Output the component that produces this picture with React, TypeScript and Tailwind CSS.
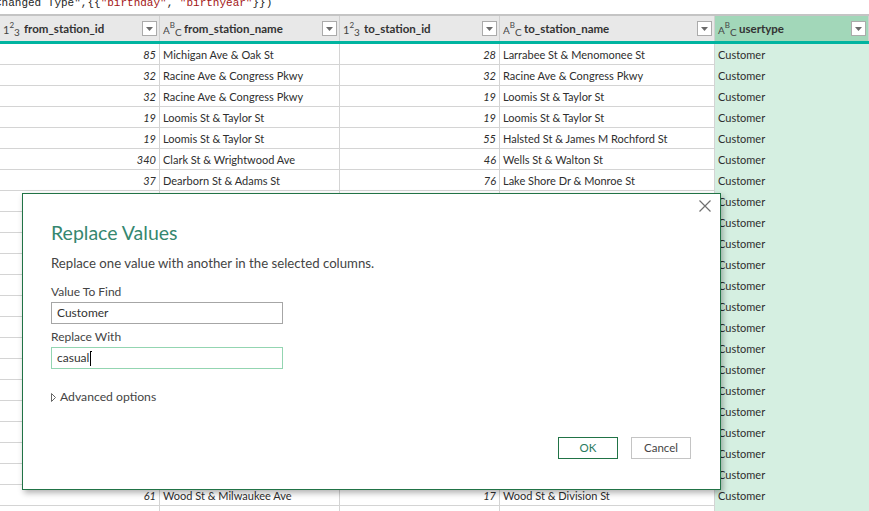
import React from "react";

type Row = { fid: string; fname: string; tid: string; tname: string };

const rows: Row[] = [
  { fid: "85", fname: "Michigan Ave & Oak St", tid: "28", tname: "Larrabee St & Menomonee St" },
  { fid: "32", fname: "Racine Ave & Congress Pkwy", tid: "32", tname: "Racine Ave & Congress Pkwy" },
  { fid: "32", fname: "Racine Ave & Congress Pkwy", tid: "19", tname: "Loomis St & Taylor St" },
  { fid: "19", fname: "Loomis St & Taylor St", tid: "19", tname: "Loomis St & Taylor St" },
  { fid: "19", fname: "Loomis St & Taylor St", tid: "55", tname: "Halsted St & James M Rochford St" },
  { fid: "340", fname: "Clark St & Wrightwood Ave", tid: "46", tname: "Wells St & Walton St" },
  { fid: "37", fname: "Dearborn St & Adams St", tid: "76", tname: "Lake Shore Dr & Monroe St" },
  { fid: "76", fname: "Lake Shore Dr & Monroe St", tid: "35", tname: "Streeter Dr & Grand Ave" },
  { fid: "35", fname: "Streeter Dr & Grand Ave", tid: "35", tname: "Streeter Dr & Grand Ave" },
  { fid: "268", fname: "Lake Shore Dr & North Blvd", tid: "90", tname: "Millennium Park" },
  { fid: "90", fname: "Millennium Park", tid: "3", tname: "Shedd Aquarium" },
  { fid: "3", fname: "Shedd Aquarium", tid: "97", tname: "Field Museum" },
  { fid: "97", fname: "Field Museum", tid: "3", tname: "Shedd Aquarium" },
  { fid: "177", fname: "Theater on the Lake", tid: "177", tname: "Theater on the Lake" },
  { fid: "85", fname: "Michigan Ave & Oak St", tid: "85", tname: "Michigan Ave & Oak St" },
  { fid: "2", fname: "Buckingham Fountain", tid: "2", tname: "Buckingham Fountain" },
  { fid: "43", fname: "Michigan Ave & Washington St", tid: "52", tname: "Michigan Ave & Lake St" },
  { fid: "52", fname: "Michigan Ave & Lake St", tid: "43", tname: "Michigan Ave & Washington St" },
  { fid: "300", fname: "Broadway & Barry Ave", tid: "117", tname: "Wilton Ave & Belmont Ave" },
  { fid: "117", fname: "Wilton Ave & Belmont Ave", tid: "300", tname: "Broadway & Barry Ave" },
  { fid: "17", fname: "Wood St & Division St", tid: "61", tname: "Wood St & Milwaukee Ave" },
  { fid: "61", fname: "Wood St & Milwaukee Ave", tid: "17", tname: "Wood St & Division St" },
  { fid: "17", fname: "Wood St & Division St", tid: "17", tname: "Wood St & Division St" },
];

const NumIcon = () => (
  <span className="inline-flex items-start text-[11px] leading-none text-[#444] w-[17px] shrink-0">
    <span className="mt-[4px]">1</span>
    <span className="text-[8px] mt-[1px]">2</span>
    <span className="mt-[7px] text-[10px]">3</span>
  </span>
);

const TextIcon = () => (
  <span className="inline-flex items-start text-[10px] leading-none text-[#444] w-[17px] shrink-0">
    <span className="mt-[5px]">A</span>
    <span className="text-[8px] mt-[1px]">B</span>
    <span className="mt-[7px]">C</span>
  </span>
);

const Dropdown = () => (
  <span className="w-[15px] h-[15px] bg-white border border-[#ababab] flex items-center justify-center shrink-0">
    <svg width="7" height="4" viewBox="0 0 7 4">
      <path d="M0 0 L7 0 L3.5 4 Z" fill="#6b6b6b" />
    </svg>
  </span>
);

const HeaderCell = ({ icon, label, green }: { icon: "num" | "text"; label: string; green?: boolean }) => (
  <div className={`h-full flex items-center pl-[3px] pr-[2px] border-r border-[#d0d0d0] ${green ? "bg-[#a2d7b9]" : "bg-[#e8e8e8]"}`}>
    {icon === "num" ? <NumIcon /> : <TextIcon />}
    <span className="ml-[4px] flex-1 font-bold text-[11.5px] text-[#333] truncate">{label}</span>
    <Dropdown />
  </div>
);

export default function App() {
  return (
    <div className="relative w-[869px] h-[511px] overflow-hidden bg-white text-[#2e2e2e]" style={{ fontFamily: 'Lato, "Noto Sans", sans-serif' }}>
      {/* formula bar tail */}
      <div className="h-[16px] border-b-2 border-[#c4c4c4] overflow-hidden">
        <div className="-mt-[6px] -ml-[5px] whitespace-pre text-[11px] leading-[18px] text-[#1e1e1e]" style={{ fontFamily: '"Liberation Mono", monospace' }}>
          Changed Type",{"{{"}
          <span className="text-[#a31515]">"birthday"</span>, <span className="text-[#a31515]">"birthyear"</span>
          {"}})"}
        </div>
      </div>

      {/* header */}
      <div className="grid grid-cols-[160px_180px_160px_215px_1fr] h-[25px]">
        <HeaderCell icon="num" label="from_station_id" />
        <HeaderCell icon="text" label="from_station_name" />
        <HeaderCell icon="num" label="to_station_id" />
        <HeaderCell icon="text" label="to_station_name" />
        <HeaderCell icon="text" label="usertype" green />
      </div>
      <div className="h-[3px] bg-[#00b4a0]" />

      {/* rows */}
      <div className="flex flex-col">
        {rows.map((r, i) => (
          <div key={i} className="grid grid-cols-[160px_180px_160px_215px_1fr] h-[21px] border-b border-[#d4d4d4] text-[11px] leading-[22px]">
            <div className="border-r border-[#d4d4d4] text-right pr-[3px] italic">{r.fid}</div>
            <div className="border-r border-[#d4d4d4] pl-[3px] truncate">{r.fname}</div>
            <div className="border-r border-[#d4d4d4] text-right pr-[3px] italic">{r.tid}</div>
            <div className="border-r border-[#d4d4d4] pl-[3px] truncate">{r.tname}</div>
            <div className="bg-[#d5efe1] pl-[3px]">Customer</div>
          </div>
        ))}
      </div>

      {/* dialog */}
      <div className="absolute left-[22px] top-[193px] w-[699px] h-[297px] bg-white border border-[#217346] shadow-[2px_3px_6px_rgba(0,0,0,0.3)]">
        <button className="absolute right-[8px] top-[5px] w-[14px] h-[14px] flex items-center justify-center">
          <svg width="12" height="12" viewBox="0 0 12 12">
            <path d="M0.5 0.5 L11.5 11.5 M11.5 0.5 L0.5 11.5" stroke="#707070" strokeWidth="1.2" />
          </svg>
        </button>
        <div className="pl-[28px] pt-[26px] flex flex-col">
          <div className="text-[19.5px] leading-[26px] text-[#35876f]">Replace Values</div>
          <div className="mt-[8px] text-[13.2px] leading-[18px] text-[#444]">Replace one value with another in the selected columns.</div>
          <div className="mt-[12px] text-[12px] leading-[16px] text-[#444]">Value To Find</div>
          <div className="mt-[2px] w-[232px] h-[22px] border border-[#a6a6a6] px-[5px] text-[12px] leading-[20px] text-[#333]">Customer</div>
          <div className="mt-[5px] text-[12px] leading-[16px] text-[#444]">Replace With</div>
          <div className="mt-[2px] w-[232px] h-[22px] border border-[#93d5b1] px-[5px] text-[12px] leading-[20px] text-[#333] flex items-center">
            casual<span className="w-[2px] h-[15px] ml-[1px] border-l border-t border-black" />
          </div>
          <div className="mt-[19px] flex items-center gap-[4px] text-[12.2px] leading-[18px] text-[#444]">
            <svg width="5" height="9" viewBox="0 0 5 9">
              <path d="M0.5 0.5 L4.5 4.5 L0.5 8.5 Z" fill="none" stroke="#666" strokeWidth="1" />
            </svg>
            <span>Advanced options</span>
          </div>
        </div>
        <div className="absolute right-[29px] bottom-[30px] flex gap-[13px]">
          <button className="w-[60px] h-[22px] border border-[#217346] text-[11.5px] text-[#2a7a5e] bg-white">OK</button>
          <button className="w-[60px] h-[22px] border border-[#c4c4c4] text-[11.5px] text-[#444] bg-white">Cancel</button>
        </div>
      </div>
    </div>
  );
}
